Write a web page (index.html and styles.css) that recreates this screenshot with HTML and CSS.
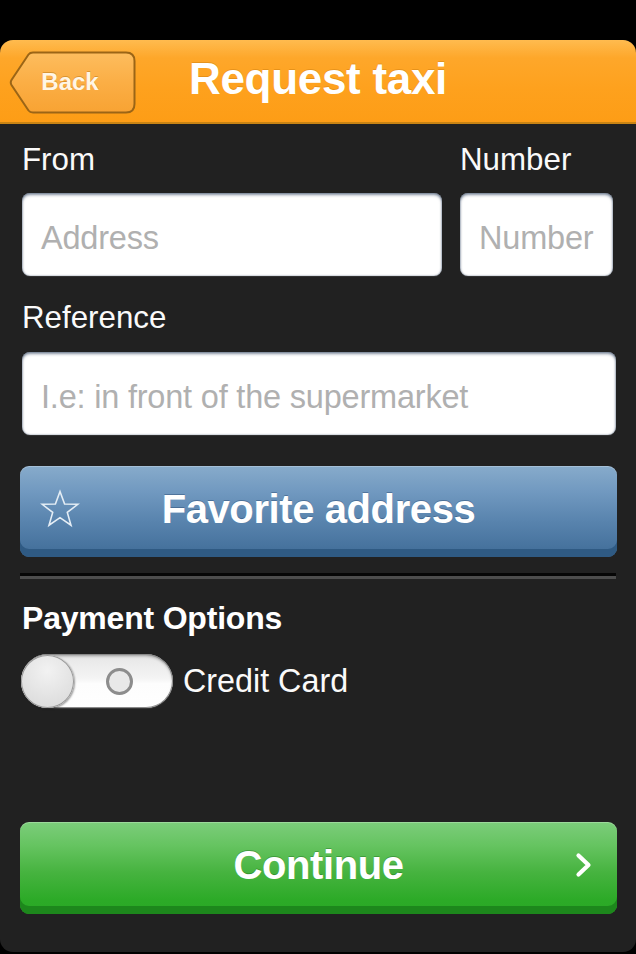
FILE: index.html
```html
<!DOCTYPE html>
<html lang="en">
<head>
<meta charset="utf-8">
<title>Request taxi</title>
<link rel="stylesheet" href="styles.css">
</head>
<body>
<div class="app">
  <header class="topbar">
    <div class="topbar-left">
      <button class="back-btn" type="button">
        <svg class="back-shape" viewBox="0 0 127 63" aria-hidden="true">
          <defs>
            <linearGradient id="backGrad" x1="0" y1="0" x2="0" y2="1">
              <stop offset="0" stop-color="#fdbd5e"/>
              <stop offset="0.5" stop-color="#fbae45"/>
              <stop offset="1" stop-color="#f8a333"/>
            </linearGradient>
          </defs>
          <path d="M24 1.5 H117 Q125.5 1.5 125.5 10 V53 Q125.5 61.5 117 61.5 H24 Q21 61.5 19.5 59.5 L2.5 34 Q1 31.5 2.5 29 L19.5 3.5 Q21 1.5 24 1.5 Z" fill="url(#backGrad)" stroke="#9b6516" stroke-width="2"/>
        </svg>
        <span class="back-label">Back</span>
      </button>
    </div>
    <h1 class="title">Request taxi</h1>
    <div class="topbar-right"></div>
  </header>

  <main class="content">
    <div class="row-fields">
      <div class="field field-grow">
        <label class="label">From</label>
        <div class="input"><span class="placeholder">Address</span></div>
      </div>
      <div class="field field-num">
        <label class="label">Number</label>
        <div class="input"><span class="placeholder">Number</span></div>
      </div>
    </div>

    <div class="field field-ref">
      <label class="label">Reference</label>
      <div class="input"><span class="placeholder">I.e: in front of the supermarket</span></div>
    </div>

    <button class="btn btn-blue" type="button">
      <svg class="star" viewBox="0 0 40 40" aria-hidden="true">
        <path d="M20 2.5 L24.6 15 L37.8 15.3 L27.3 23.4 L31 36.2 L20 28.6 L9 36.2 L12.7 23.4 L2.2 15.3 L15.4 15 Z" fill="none" stroke="#e4edf5" stroke-width="1.6" stroke-linejoin="miter"/>
      </svg>
      <span class="btn-text">Favorite address</span>
    </button>

    <div class="separator"></div>

    <h2 class="section-title">Payment Options</h2>

    <div class="toggle-row">
      <div class="toggle">
        <div class="knob"></div>
        <div class="ring"></div>
      </div>
      <span class="toggle-label">Credit Card</span>
    </div>

    <button class="btn btn-green" type="button">
      <span class="btn-text">Continue</span>
      <svg class="chevron" viewBox="0 0 18 26" aria-hidden="true">
        <path d="M3.5 3.5 L13.5 13 L3.5 22.5" fill="none" stroke="#fff" stroke-width="4.2" stroke-linecap="round" stroke-linejoin="round"/>
      </svg>
    </button>
  </main>
</div>
</body>
</html>
```

FILE: styles.css
```css
* {
  box-sizing: border-box;
}

html, body {
  margin: 0;
  padding: 0;
  background: #000;
}

body {
  width: 636px;
  height: 954px;
  overflow: hidden;
  font-family: "Liberation Sans", Arial, Helvetica, sans-serif;
  padding-top: 40px;
}

.app {
  width: 636px;
  height: 912px;
  border-radius: 13px;
  overflow: hidden;
  background: #212121;
  display: flex;
  flex-direction: column;
}

/* Header */
.topbar {
  height: 84px;
  display: grid;
  grid-template-columns: 1fr auto 1fr;
  align-items: center;
  background: linear-gradient(to bottom, #ffbb4f 0%, #fea72a 22%, #fea11d 60%, #fd9d16 100%);
  border-bottom: 2px solid #c98414;
  flex: none;
}

.topbar-left {
  display: flex;
  align-items: center;
  padding-left: 9px;
  padding-top: 2px;
}

.back-btn {
  position: relative;
  width: 127px;
  height: 63px;
  border: 0;
  padding: 0 5px 0 0;
  margin: 0;
  background: transparent;
  display: flex;
  align-items: center;
  justify-content: center;
  cursor: pointer;
}

.back-shape {
  position: absolute;
  left: 0;
  top: 0;
  width: 127px;
  height: 63px;
}

.back-label {
  position: relative;
  font-family: "Liberation Sans", Arial, sans-serif;
  font-weight: bold;
  font-size: 24px;
  color: #fff6e6;
  text-shadow: 0 -1px 0 rgba(150, 90, 0, 0.35);
}

.title {
  margin: 0;
  font-size: 44px;
  font-weight: bold;
  color: #fff;
  letter-spacing: -0.3px;
  text-shadow: 0 -1px 0 rgba(160, 90, 0, 0.25);
  padding-bottom: 4px;
}

/* Content */
.content {
  flex: 1;
  padding: 18px 20px 0 22px;
  display: flex;
  flex-direction: column;
}

.row-fields {
  display: flex;
  gap: 18px;
}

.field {
  display: flex;
  flex-direction: column;
}

.field-grow {
  flex: 0 0 420px;
}

.field-num {
  flex: 0 0 153px;
}

.field-ref {
  margin-top: 24px;
}

.label {
  font-size: 31.3px;
  line-height: 36px;
  color: #fafafa;
  margin-bottom: 15px;
  white-space: nowrap;
}

.field-ref .label {
  margin-bottom: 16px;
}

.input {
  height: 83px;
  background: #fff;
  border-radius: 8px;
  display: flex;
  align-items: center;
  padding: 8px 0 0 19px;
  box-shadow: inset 0 2px 3px rgba(40, 60, 90, 0.55), inset 0 0 2px rgba(40, 60, 90, 0.6), 0 1px 0 rgba(255, 255, 255, 0.08);
  overflow: hidden;
  white-space: nowrap;
}

.placeholder {
  font-size: 32.5px;
  color: #b0b0b0;
  letter-spacing: -0.2px;
}

/* Buttons */
.btn {
  position: relative;
  margin: 0 -1px 0 -2px;
  border: 0;
  border-radius: 9px;
  display: flex;
  align-items: center;
  justify-content: center;
  cursor: pointer;
  font-family: "Liberation Sans", Arial, sans-serif;
}

.btn-text {
  font-size: 40px;
  font-weight: bold;
  color: #fff;
  letter-spacing: -0.4px;
}

.btn-blue {
  margin-top: 31px;
  height: 91px;
  padding-bottom: 6px;
  background: linear-gradient(to bottom, #87abcb 0%, #7199c0 28%, #5984ae 60%, #46729d 90%, #426e99 100%);
  box-shadow: inset 0 -8px 0 #2f5a83, inset 0 1px 0 rgba(255, 255, 255, 0.25);
}

.btn-blue .btn-text {
  text-shadow: 0 -1px 0 rgba(20, 50, 90, 0.35);
}

.star {
  position: absolute;
  left: 20px;
  top: 23px;
  width: 40px;
  height: 40px;
}

.separator {
  margin-top: 16px;
  margin-right: 0;
  margin-left: -2px;
  height: 6px;
  border-top: 3px solid #060606;
  border-bottom: 3px solid #4d4d4d;
}

.section-title {
  margin: 21px 0 0 0;
  font-size: 32px;
  line-height: 36px;
  font-weight: bold;
  color: #fff;
  letter-spacing: -0.2px;
}

.toggle-row {
  margin-top: 18px;
  margin-left: -1px;
  display: flex;
  align-items: center;
  gap: 10px;
}

.toggle {
  position: relative;
  width: 152px;
  height: 54px;
  border-radius: 27px;
  background: linear-gradient(to bottom, #e6e6e6 0%, #f4f4f4 45%, #fdfdfd 55%, #ffffff 100%);
  box-shadow: inset 0 0 0 1px #8a8a8a, inset 0 2px 3px rgba(0, 0, 0, 0.35), 0 1px 1px rgba(255, 255, 255, 0.12);
  display: flex;
  align-items: center;
}

.knob {
  width: 53px;
  height: 53px;
  margin-left: 0;
  border-radius: 50%;
  background: radial-gradient(circle at 50% 30%, #f2f2f2 0%, #e2e2e2 60%, #d8d8d8 100%);
  box-shadow: inset 0 0 0 1px #9a9a9a, 1px 1px 2px rgba(0, 0, 0, 0.4);
}

.ring {
  width: 27px;
  height: 27px;
  margin-left: 32px;
  border-radius: 50%;
  border: 3px solid #8d8d8d;
  background: #e9e9e9;
}

.toggle-label {
  font-size: 32.3px;
  color: #fafafa;
  padding-top: 1px;
}

.btn-green {
  margin-top: 114px;
  height: 92px;
  padding-bottom: 6px;
  background: linear-gradient(to bottom, #7ccd7b 0%, #66c461 25%, #46b33f 55%, #2caa27 85%, #2aa826 100%);
  box-shadow: inset 0 -8px 0 #1d871c, inset 0 1px 0 rgba(255, 255, 255, 0.25);
}

.btn-green .btn-text {
  text-shadow: 0 -1px 0 rgba(0, 70, 0, 0.3);
}

.chevron {
  position: absolute;
  right: 24px;
  top: 30px;
  width: 18px;
  height: 26px;
}
```
